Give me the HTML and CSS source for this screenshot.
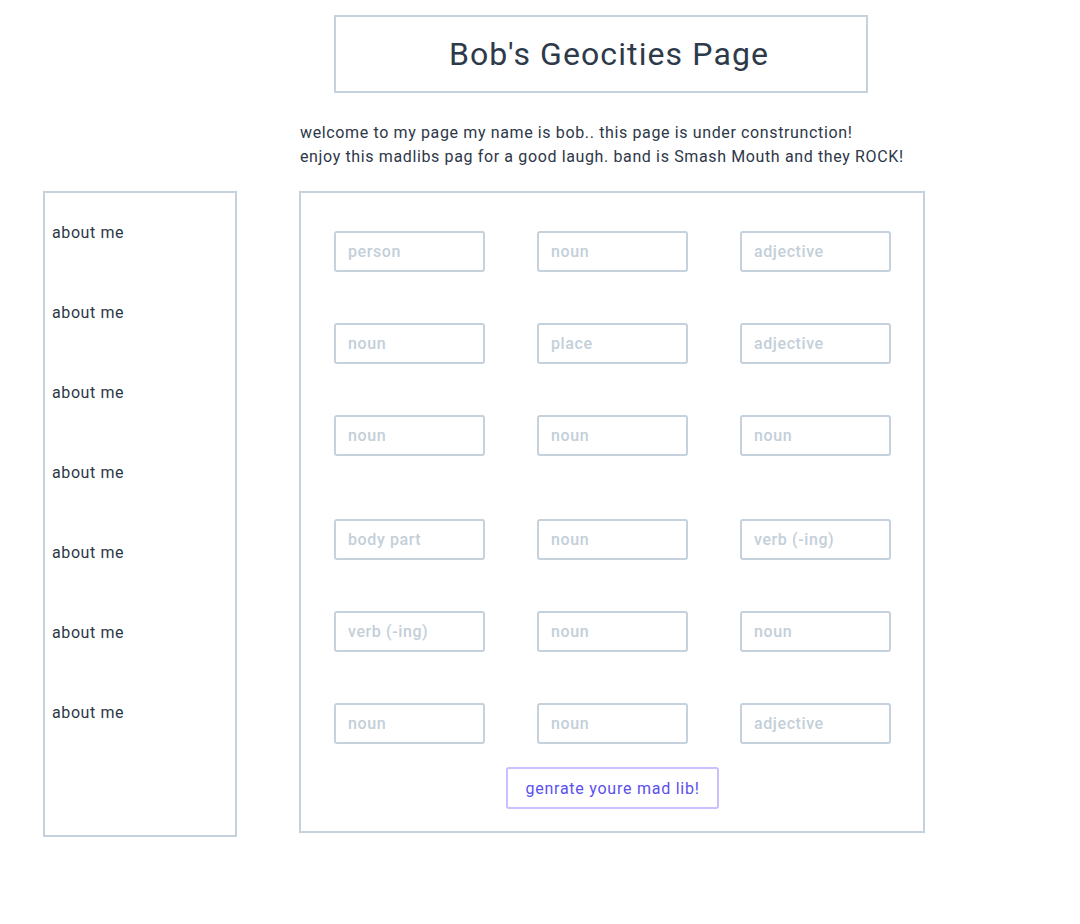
FILE: index.html
```html
<!DOCTYPE html>
<html lang="en">
<head>
<meta charset="utf-8">
<title>Bob's Geocities Page</title>
<link rel="stylesheet" href="styles.css">
</head>
<body>
<div class="page">
  <header class="title-box"><h1 class="title">Bob's Geocities Page</h1></header>
  <p class="intro">welcome to my page my name is bob.. this page is under construnction!<br>enjoy this madlibs pag for a good laugh. band is Smash Mouth and they ROCK!</p>
  <div class="content">
    <nav class="sidebar">
      <a class="side-link">about me</a>
      <a class="side-link">about me</a>
      <a class="side-link">about me</a>
      <a class="side-link">about me</a>
      <a class="side-link">about me</a>
      <a class="side-link">about me</a>
      <a class="side-link">about me</a>
    </nav>
    <main class="madlib">
      <div class="group">
        <input class="field" placeholder="person">
        <input class="field" placeholder="noun">
        <input class="field" placeholder="adjective">
        <input class="field" placeholder="noun">
        <input class="field" placeholder="place">
        <input class="field" placeholder="adjective">
        <input class="field" placeholder="noun">
        <input class="field" placeholder="noun">
        <input class="field" placeholder="noun">
      </div>
      <div class="group group-2">
        <input class="field" placeholder="body part">
        <input class="field" placeholder="noun">
        <input class="field" placeholder="verb (-ing)">
        <input class="field" placeholder="verb (-ing)">
        <input class="field" placeholder="noun">
        <input class="field" placeholder="noun">
        <input class="field" placeholder="noun">
        <input class="field" placeholder="noun">
        <input class="field" placeholder="adjective">
      </div>
      <div class="actions"><button class="btn">genrate youre mad lib!</button></div>
    </main>
  </div>
</div>
</body>
</html>
```
FILE: styles.css
```css
* { box-sizing: border-box; }
body {
  margin: 0;
  background: #ffffff;
  color: #2d3748;
  font-family: Roboto, "Noto Sans", sans-serif;
  font-size: 16px;
}
.page {
  padding-top: 15px;
}
.title-box {
  margin-left: 334px;
  width: 534px;
  height: 78px;
  border: 2px solid #c5d1dc;
  display: flex;
  align-items: center;
  justify-content: center;
  padding-left: 16px;
}
.title {
  margin: 0;
  font-weight: 400;
  font-size: 32px;
  color: #2d3a4a;
  letter-spacing: 1.1px;
}
.intro {
  margin: 28px 0 0 300px;
  line-height: 24px;
  font-size: 16px;
  letter-spacing: 0.63px;
  color: #2d3748;
}
.content {
  display: flex;
  align-items: flex-start;
  gap: 62px;
  margin-top: 22px;
  padding-left: 43px;
}
.sidebar {
  width: 194px;
  height: 646px;
  border: 2px solid #c5d1dc;
  padding: 28px 0 0 7px;
  display: flex;
  flex-direction: column;
  gap: 56px;
}
.side-link {
  line-height: 24px;
  letter-spacing: 0.6px;
  color: #2d3748;
}
.madlib {
  width: 626px;
  height: 642px;
  border: 2px solid #c5d1dc;
  padding: 38px 0 0 33px;
}
.group {
  display: grid;
  grid-template-columns: repeat(3, 151px);
  column-gap: 52px;
  row-gap: 51px;
}
.group-2 {
  margin-top: 63px;
}
.field {
  width: 151px;
  height: 41px;
  border: 2px solid #c5d1dc;
  border-radius: 3px;
  padding: 0 0 0 12px;
  font-family: inherit;
  font-size: 16px;
  font-weight: 500;
  letter-spacing: 0.6px;
  color: #2d3748;
  outline: none;
}
.field::placeholder {
  color: #c3cfd9;
  opacity: 1;
}
.actions {
  width: 557px;
  display: flex;
  justify-content: center;
  margin-top: 23px;
}
.btn {
  width: 213px;
  height: 42px;
  border: 2px solid #c7c2ff;
  border-radius: 3px;
  background: #ffffff;
  color: #5a50ee;
  font-family: inherit;
  font-size: 16px;
  letter-spacing: 0.75px;
}
```
